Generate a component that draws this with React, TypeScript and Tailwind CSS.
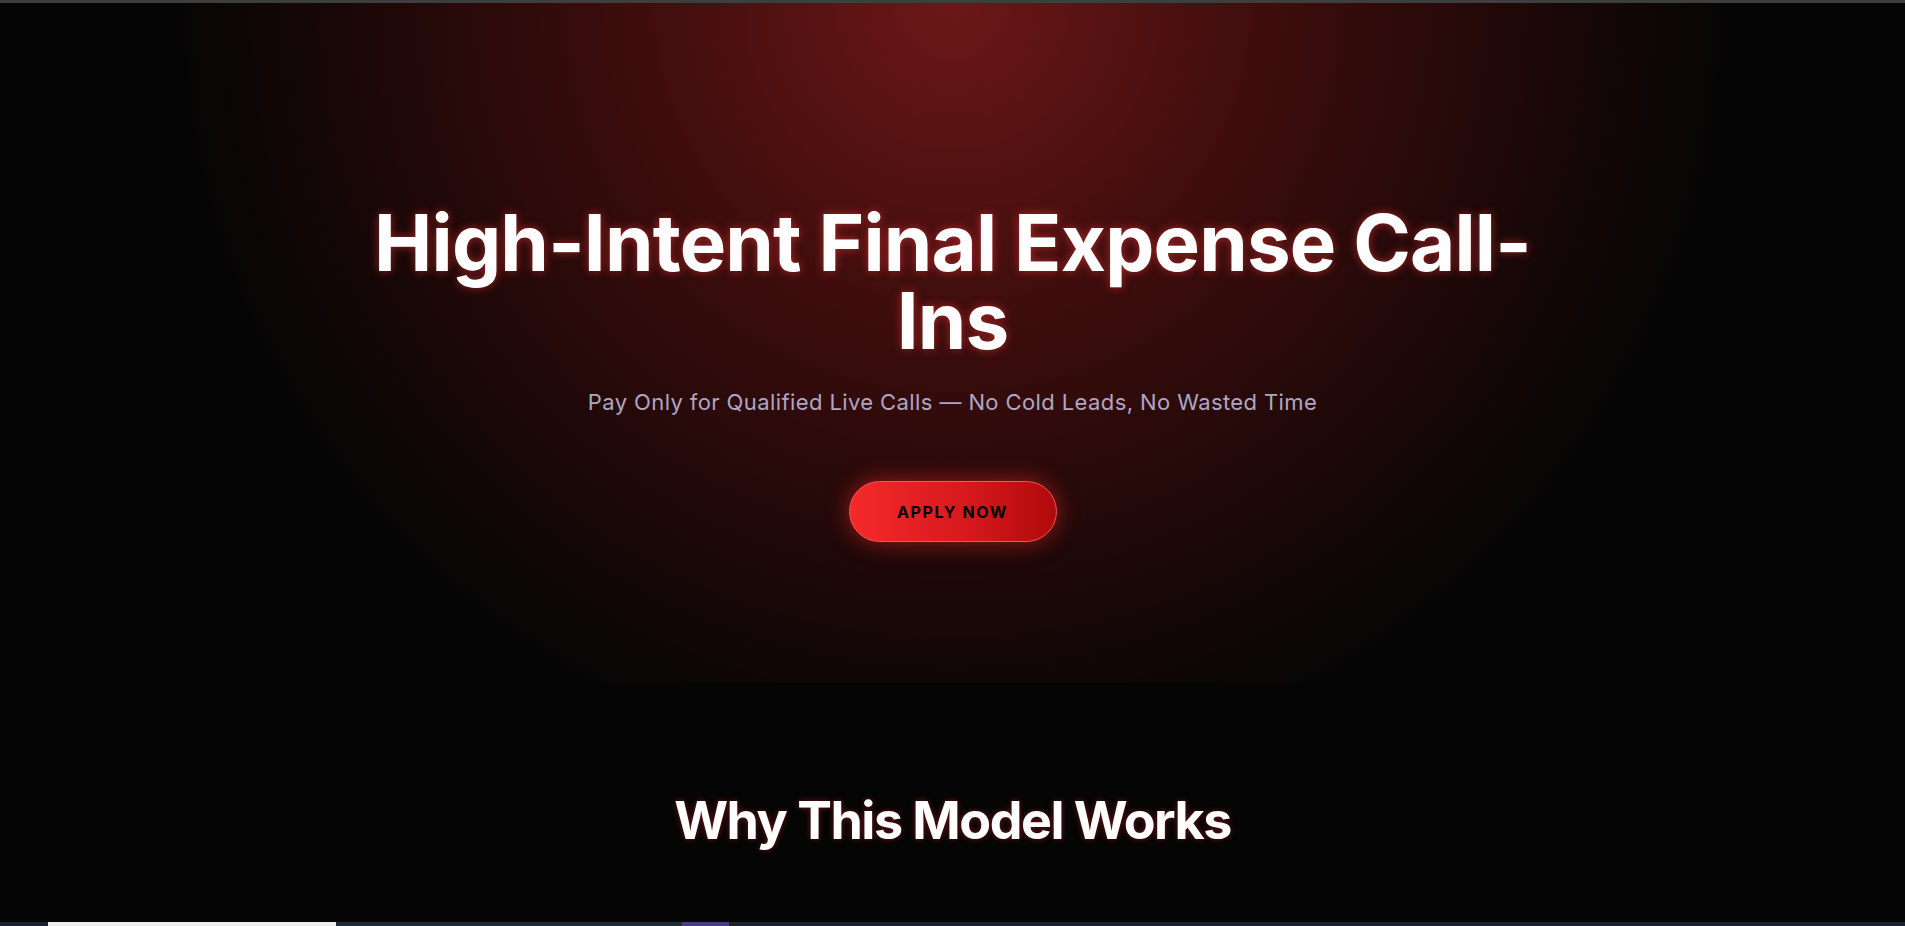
import React from 'react';

const heroBg =
  'bg-[radial-gradient(circle_770px_at_50%_0%,#6c1717_0%,#3a0c0c_45%,#060505_100%)]';

/**
 * Thin strip at the very bottom (the next section peeking in)
 */
const BottomStrip = () => (
  <div className="flex h-[4px] w-full shrink-0 bg-[#1d2230]">
    <div className="w-[48px] bg-[#1b2130]" />
    <div className="w-[288px] bg-[#f1eded]" />
    <div className="w-[346px] bg-[#1f2a38]" />
    <div className="w-[47px] bg-[#4a3a8a]" />
    <div className="flex-1 bg-[#1c2130]" />
  </div>
);

export default function App() {
  return (
    <div
      className="flex h-screen w-full flex-col overflow-hidden bg-[#050505]"
      style={{ fontFamily: 'Inter, "Noto Sans", sans-serif' }}>
      <div className="h-[3px] w-full shrink-0 bg-[#3d3f3f]" />

      {/* Hero */}
      <section
        className={`flex h-[680px] w-full shrink-0 flex-col items-center pt-[201px] ${heroBg}`}>
        <h1 className="max-w-[1200px] px-4 text-center text-[78px] font-bold leading-[78px] tracking-[-0.8px] text-white [text-shadow:0_0_10px_rgba(255,60,60,0.55)]">
          High-Intent Final Expense Call-Ins
        </h1>
        <p className="mt-[26px] text-[22px] leading-[32px] tracking-[0.4px] text-[#aea6c2]">
          Pay Only for Qualified Live Calls — No Cold Leads, No Wasted Time
        </p>
        <button className="mt-[63px] h-[61px] w-[208px] rounded-full border border-[#ff5353] bg-[linear-gradient(90deg,#f42a2a_0%,#d8191d_55%,#b00a0c_100%)] text-[16px] font-bold tracking-[1.6px] text-black shadow-[0_0_22px_rgba(255,40,40,0.55)]">
          APPLY NOW
        </button>
      </section>

      {/* Why section */}
      <section className="flex w-full flex-1 flex-col items-center bg-[#050505] pt-[106px]">
        <h2 className="text-center text-[52px] font-bold leading-[64px] tracking-[-1.5px] text-white [text-shadow:0_0_6px_rgba(255,40,40,0.4)]">
          Why This Model Works
        </h2>
      </section>

      <BottomStrip />
    </div>
  );
}
